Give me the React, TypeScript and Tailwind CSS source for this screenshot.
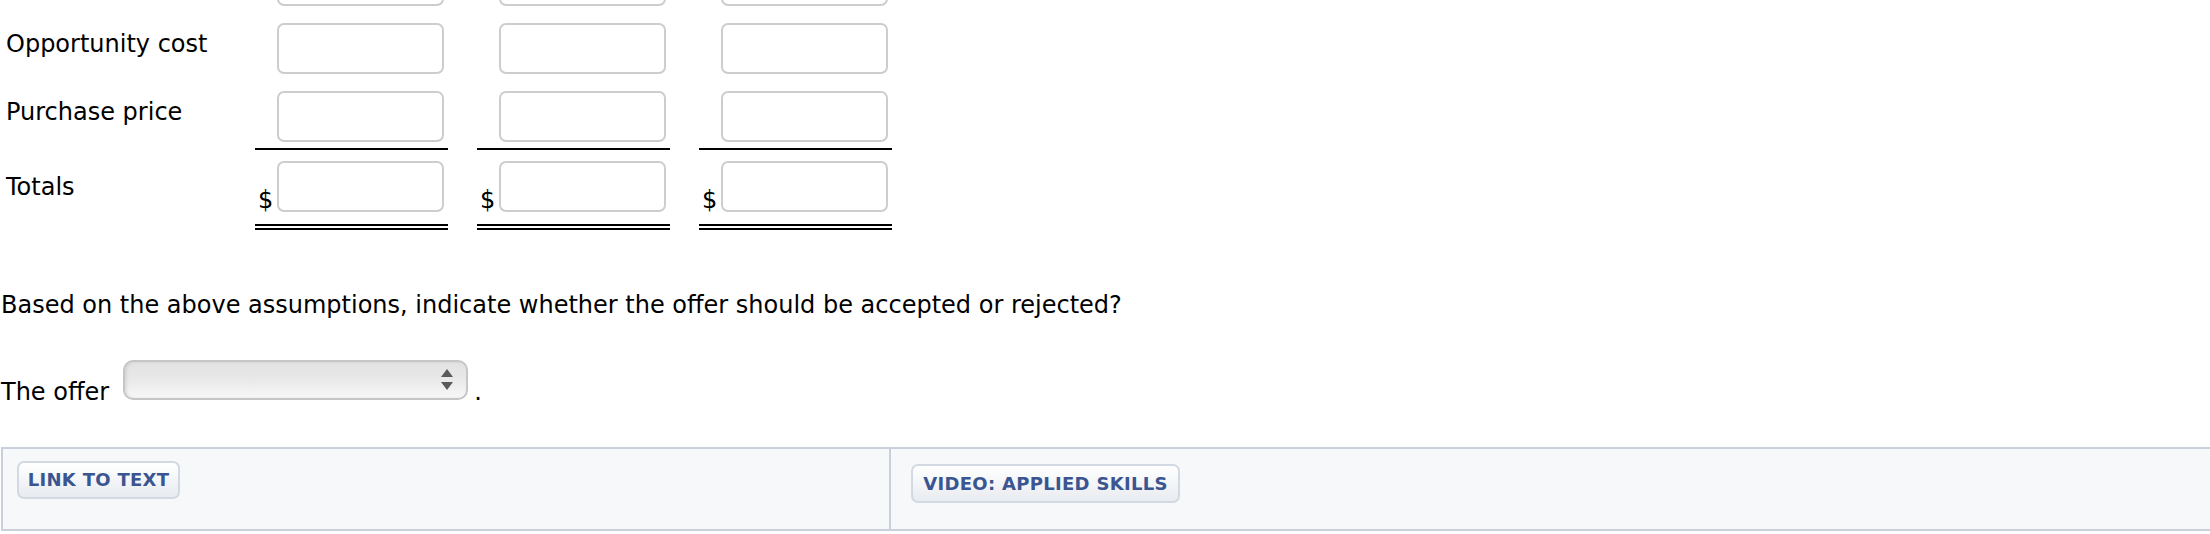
import React from "react";

const columns = [0, 1, 2];

function Field() {
  return (
    <input
      type="text"
      className="w-[167px] h-[51px] rounded-[7px] border-2 border-[#cdcdcd] bg-white outline-none"
    />
  );
}

function PlainRow({ label, top }: { label: string; top: string }) {
  return (
    <div className={`flex ${top}`}>
      <div className="w-[255px] pl-[6px] pt-[7px] leading-[28px]">{label}</div>
      {columns.map((c) => (
        <div key={c} className="w-[222px]">
          <div className="w-[193px] pl-[22px]">
            <Field />
          </div>
        </div>
      ))}
    </div>
  );
}

function Button({ children, className }: { children: React.ReactNode; className?: string }) {
  return (
    <button
      className={`flex items-center justify-center rounded-[7px] border-2 border-[#d3d9e3] bg-gradient-to-b from-white to-[#e8ebf0] font-['DejaVu_Sans'] font-bold text-[18px] leading-none tracking-[0.3px] text-[#3a5590] ${className ?? ""}`}
    >
      {children}
    </button>
  );
}

export default function App() {
  return (
    <div className="w-[2210px] h-[534px] overflow-hidden bg-white text-black font-['DejaVu_Sans',sans-serif] text-[24px]">
      {/* worksheet table, first row runs off the top */}
      <div className="flex flex-col mt-[-45px]">
        <PlainRow label="" top="" />
        <PlainRow label="Opportunity cost" top="mt-[17px]" />

        <div className="flex mt-[17px]">
          <div className="w-[255px] pl-[6px] pt-[7px] leading-[28px]">Purchase price</div>
          {columns.map((c) => (
            <div key={c} className="w-[222px]">
              <div className="w-[193px] pl-[22px] pb-[6px] border-b-2 border-black">
                <Field />
              </div>
            </div>
          ))}
        </div>

        <div className="flex">
          <div className="w-[255px] pl-[6px] pt-[23px] leading-[28px]">Totals</div>
          {columns.map((c) => (
            <div key={c} className="w-[222px]">
              <div className="w-[193px] flex pt-[11px] pb-[12px] border-b-[6px] border-double border-black">
                <span className="w-[22px] pl-[3px] self-end leading-[28px] mb-[-2px]">$</span>
                <Field />
              </div>
            </div>
          ))}
        </div>
      </div>

      <p className="mt-[61px] pl-[1px] leading-[28px]">
        Based on the above assumptions, indicate whether the offer should be accepted or rejected?
      </p>

      <div className="flex items-end mt-[41px] pl-[1px]">
        <span className="leading-[24px] mb-[-4px]">The offer</span>
        <div className="ml-[14px] w-[345px] h-[40px] rounded-[10px] border-2 border-[#c6c6c6] bg-gradient-to-b from-[#e2e2e2] via-[#e9e9e9] to-[#f8f8f8] shadow-[inset_2px_0_3px_rgba(0,0,0,0.08)] flex items-center justify-end pr-[13px]">
          <svg width="12" height="22" viewBox="0 0 12 22" className="fill-[#5a5a5a]">
            <polygon points="6,0 12,8 0,8" />
            <polygon points="0,13 12,13 6,21" />
          </svg>
        </div>
        <span className="leading-[24px] mb-[-4px] ml-[6px]">.</span>
      </div>

      {/* resource links */}
      <div className="mt-[47px] ml-[1px] flex h-[84px] border-y-2 border-l-2 border-[#c9d0dc] bg-[#f7f8fa]">
        <div className="w-[888px] border-r-2 border-[#c9d0dc] pl-[14px] pt-[12px]">
          <Button className="w-[163px] h-[38px]">LINK TO TEXT</Button>
        </div>
        <div className="flex-1 pl-[20px] pt-[15px]">
          <Button className="w-[269px] h-[39px]">VIDEO: APPLIED SKILLS</Button>
        </div>
      </div>
    </div>
  );
}
